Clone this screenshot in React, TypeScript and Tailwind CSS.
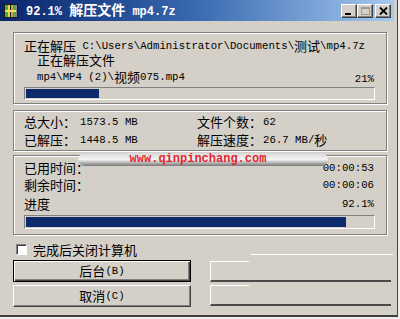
import React from 'react';

const CJK = /[\u2e80-\u9fff\uff00-\uffef\u3000-\u303f]/;
const SPLIT = /[\u2e80-\u9fff\uff00-\uffef\u3000-\u303f]+|[^\u2e80-\u9fff\uff00-\uffef\u3000-\u303f]+/g;

// mixed text: wide glyphs in Noto CJK, half-width ones in a mono face (like SimSun)
const Txt: React.FC<{ s: string }> = ({ s }) => (
  <>
    {(s.match(SPLIT) || []).map((p, i) =>
      CJK.test(p) ? (
        <span key={i} className="font-['Noto_Sans_CJK_SC',sans-serif] text-[13px] leading-[14px]">{p}</span>
      ) : (
        <span key={i} className="font-['Liberation_Mono',monospace] text-[10.7px] leading-[14px] whitespace-pre">{p}</span>
      )
    )}
  </>
);

const TitleTxt: React.FC<{ s: string }> = ({ s }) => (
  <>
    {(s.match(SPLIT) || []).map((p, i) =>
      CJK.test(p) ? (
        <span key={i} className="font-['Noto_Sans_CJK_SC',sans-serif] text-[14px] font-bold">{p}</span>
      ) : (
        <span key={i} className="font-['Liberation_Mono',monospace] text-[12px] font-bold whitespace-pre">{p}</span>
      )
    )}
  </>
);

const Group: React.FC<{ className?: string; children: React.ReactNode }> = ({ className = '', children }) => (
  <div className={`w-[374px] border border-[#808080] shadow-[inset_1px_1px_0_#fff,1px_1px_0_#fff] ${className}`}>
    {children}
  </div>
);

const Progress: React.FC<{ pct: number; className?: string }> = ({ pct, className = '' }) => (
  <div className={`w-[351px] border border-t-[#808080] border-l-[#808080] border-b-white border-r-white p-px ${className}`}>
    <div className="h-full bg-[#0c2a6c]" style={{ width: `${pct}%` }} />
  </div>
);

const CapButton: React.FC<{ children: React.ReactNode; className?: string }> = ({ children, className = '' }) => (
  <div
    className={`w-[16px] h-[14px] bg-[#d4d0c8] flex items-center justify-center border border-t-white border-l-white border-b-[#404040] border-r-[#404040] shadow-[inset_-1px_-1px_0_#808080] ${className}`}
  >
    {children}
  </div>
);

const AppIcon = () => (
  <svg width="16" height="16" viewBox="0 0 16 16">
    <rect x="1" y="1" width="14" height="14" fill="#1a1a1a" />
    <rect x="2" y="2" width="3" height="12" fill="#4caf3a" />
    <rect x="5" y="2" width="2" height="12" fill="#e8d84a" />
    <rect x="8" y="2" width="2" height="12" fill="#c9a64a" />
    <rect x="10" y="2" width="3" height="12" fill="#5aa84a" />
    <rect x="2" y="7" width="11" height="2" fill="#f0e070" />
    <rect x="13" y="2" width="1" height="12" fill="#8a8a8a" />
  </svg>
);

const App: React.FC = () => {
  return (
    <div className="w-[400px] h-[319px] bg-[#eeeeee] overflow-hidden">
      <div className="relative w-[398px] h-[317px] bg-[#d4d0c8] border-r border-b-2 border-[#404040] flex flex-col">
        {/* title bar */}
        <div className="w-[394px] h-[21px] flex items-center bg-gradient-to-r from-[#0a246a] via-[#3a6ab0] to-[#a6caf0] pl-[3px] pr-[3px]">
          <AppIcon />
          <div className="ml-[7px] text-white leading-[16px] flex items-baseline">
            <TitleTxt s="92.1% 解压文件 mp4.7z" />
          </div>
          <div className="ml-auto flex items-center">
            <CapButton>
              <div className="w-[6px] h-[2px] bg-black mt-[6px] -ml-[2px]" />
            </CapButton>
            <CapButton>
              <div className="w-[9px] h-[8px] border border-t-2 border-[#9a9a9a]" />
            </CapButton>
            <CapButton className="ml-[2px]">
              <svg width="9" height="8" viewBox="0 0 9 8">
                <path d="M1 0.5 L8 7.5 M8 0.5 L1 7.5" stroke="black" strokeWidth="1.8" />
              </svg>
            </CapButton>
          </div>
        </div>

        {/* body */}
        <div className="pl-[13px] pt-[11px] flex flex-col text-black">
          <Group className="pt-[6px] pb-[3px] pl-[10px] flex flex-col">
            <div className="h-[14px] flex items-center leading-[14px]">
              <Txt s="正在解压 C:\Users\Administrator\Documents\测试\mp4.7z" />
            </div>
            <div className="h-[14px] pl-[13px] flex items-center leading-[14px]">
              <Txt s="正在解压文件" />
            </div>
            <div className="h-[16px] mt-[2px] pl-[13px] pr-[12px] flex items-center leading-[14px]">
              <Txt s="mp4\MP4 (2)\视频075.mp4" />
              <span className="ml-auto">
                <Txt s="21%" />
              </span>
            </div>
            <Progress pct={21} className="h-[13px] mt-[2px]" />
          </Group>

          <Group className="mt-[6px] pt-[2px] pb-px pl-[10px]">
            <div className="grid grid-cols-[56px_117px_66px_1fr] leading-[14px]">
              <div className="h-[18px] flex items-center"><Txt s="总大小：" /></div>
              <div className="h-[18px] flex items-center"><Txt s="1573.5 MB" /></div>
              <div className="h-[18px] flex items-center"><Txt s="文件个数：" /></div>
              <div className="h-[18px] flex items-center"><Txt s="62" /></div>
              <div className="h-[18px] flex items-center"><Txt s="已解压：" /></div>
              <div className="h-[18px] flex items-center"><Txt s="1448.5 MB" /></div>
              <div className="h-[18px] flex items-center"><Txt s="解压速度：" /></div>
              <div className="h-[18px] flex items-center"><Txt s="26.7 MB/秒" /></div>
            </div>
          </Group>

          <Group className="mt-[4px] pt-[3px] pb-[5px] pl-[10px] flex flex-col">
            <div className="h-[17px] pr-[12px] flex items-center justify-between leading-[14px]">
              <Txt s="已用时间：" />
              <Txt s="00:00:53" />
            </div>
            <div className="h-[17px] pr-[12px] flex items-center justify-between leading-[14px]">
              <Txt s="剩余时间：" />
              <Txt s="00:00:06" />
            </div>
            <div className="h-[16px] mt-[3px] pr-[12px] flex items-center justify-between leading-[14px]">
              <Txt s="进度" />
              <Txt s="92.1%" />
            </div>
            <Progress pct={92.1} className="h-[14px] mt-[3px]" />
          </Group>

          <div className="mt-[7px] h-[14px] flex items-center leading-[14px]">
            <div className="ml-[3px] w-[11px] h-[11px] bg-white border border-t-[#808080] border-l-[#808080] border-b-white border-r-white shadow-[inset_1px_1px_0_#404040]" />
            <div className="ml-[6px]">
              <Txt s="完成后关闭计算机" />
            </div>
            <div className="ml-auto mr-[4px] self-end mb-px w-[142px] h-px bg-white" />
          </div>

          <div className="mt-[4px] flex items-start">
            <div className="w-[178px] h-[22px] flex items-center justify-center leading-[14px] border border-black shadow-[inset_1px_1px_0_#fff,inset_-1px_-1px_0_#404040,inset_-2px_-2px_0_#808080]">
              <Txt s="后台(B)" />
            </div>
            <div className="ml-[19px] mt-px w-[181px] h-[21px] border-l border-white border-b-2 border-b-[#4a4a4a]">
              <div className="w-[38px] h-px bg-white" />
            </div>
          </div>
          <div className="mt-[3px] flex items-start">
            <div className="w-[178px] h-[22px] flex items-center justify-center leading-[14px] border border-t-white border-l-white border-b-[#404040] border-r-[#404040] shadow-[inset_-1px_-1px_0_#808080]">
              <Txt s="取消(C)" />
            </div>
            <div className="ml-[19px] w-[181px] h-[21px] border-l border-white border-b-2 border-b-[#4a4a4a]">
              <div className="w-[38px] h-px bg-white" />
            </div>
          </div>
        </div>

        {/* watermark overlay */}
        <div className="absolute left-[78px] top-[153px] w-[250px] h-[13px] rounded-full bg-gradient-to-b from-[#d8d8d8] via-[#f4f4f4] to-[#7a7a7a] flex items-center justify-center">
          <span className="font-['Liberation_Mono',monospace] text-[12px] font-bold text-[#e3262e] leading-[12px] -mt-[2px] ml-[-10px]">
            www.qinpinchang.com
          </span>
        </div>
      </div>
    </div>
  );
};

export default App;
